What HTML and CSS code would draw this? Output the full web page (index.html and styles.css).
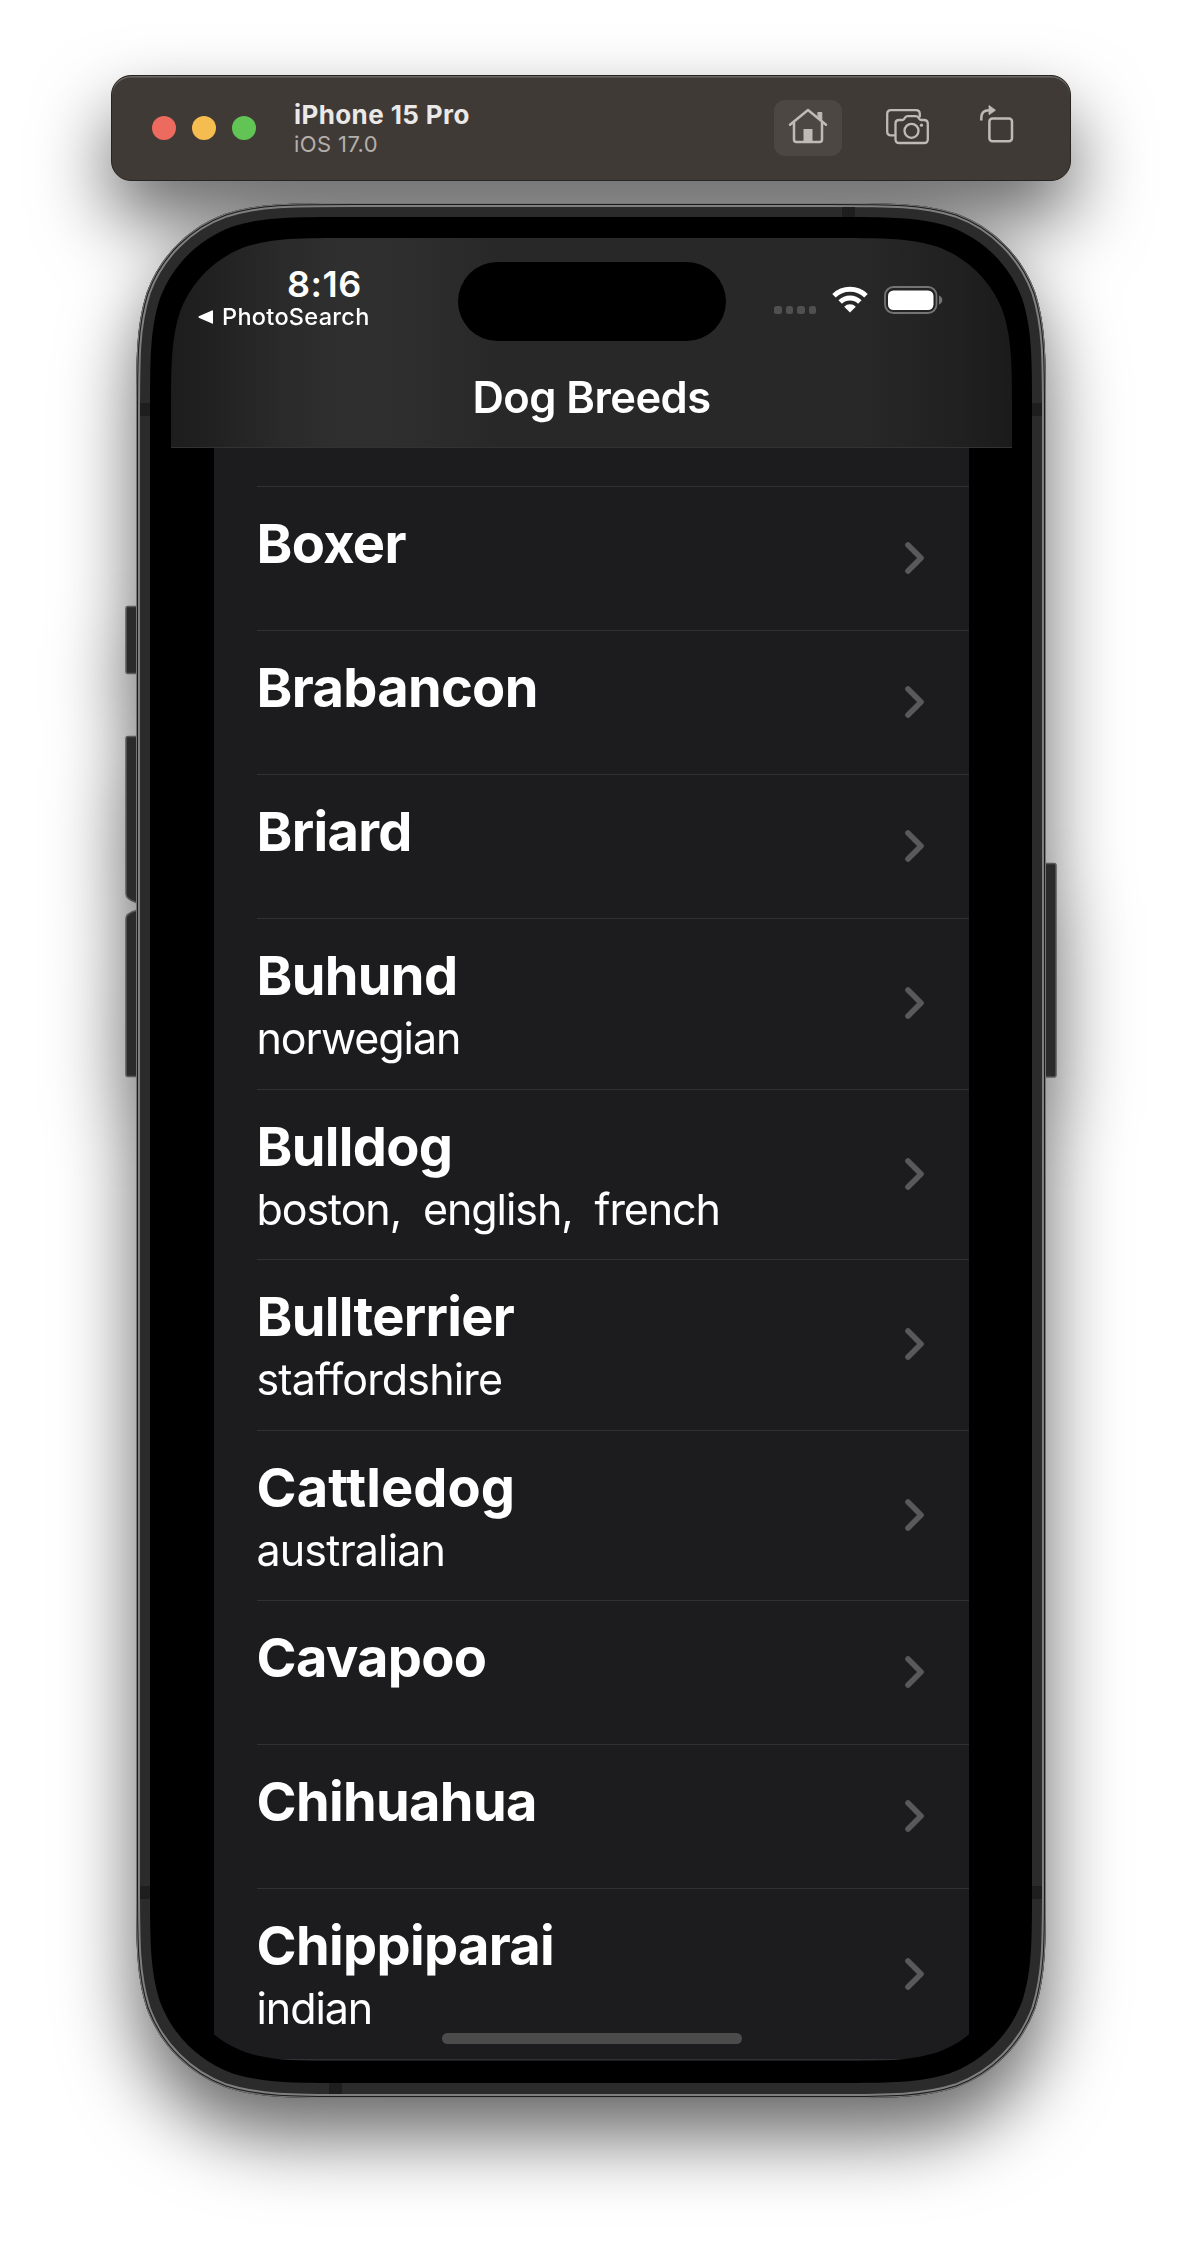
FILE: index.html
```
<!DOCTYPE html>
<html lang="en">
<head>
<meta charset="utf-8">
<title>Dog Breeds</title>
<link rel="stylesheet" href="styles.css">
</head>
<body>
<svg class="defs" aria-hidden="true">
  <symbol id="chevron" viewBox="0 0 19 32"><path d="M3 3 16 16 3 29" fill="none" stroke="#59595b" stroke-width="5.6" stroke-linecap="round" stroke-linejoin="round"/></symbol>
</svg>
<main class="simulator">
  <header class="toolbar">
    <div class="lights"><i class="light light--close"></i><i class="light light--min"></i><i class="light light--max"></i></div>
    <div class="device"><div class="device__name">iPhone 15 Pro</div><div class="device__os">iOS 17.0</div></div>
    <div class="tools">
      <span class="tool tool--active">
        <svg width="40" height="36" viewBox="0 0 40 36" fill="none" stroke="#bfbab6" stroke-width="2.5" stroke-linecap="round" stroke-linejoin="round"><path d="M2 16.8 20 2 38 16.8M6 14V31.500Q6 34 8.500 34H31.500Q34 34 34 31.500V14"/><path d="M30.200 4.500h3.600v9l-3.600-3z" fill="#bfbab6" stroke-width="1"/><path d="M15.500 21h9v12.500h-9z" fill="#bfbab6" stroke="none"/></svg>
      </span>
      <span class="tool tool--camera">
        <svg width="43" height="36" viewBox="0 0 43 36" fill="none" stroke="#bfbab6" stroke-width="2.300" stroke-linecap="round" stroke-linejoin="round"><path d="M8.500 26.400H5Q1.200 26.400 1.200 22.600V5Q1.200 1.200 5 1.200H30Q33.800 1.200 33.800 5V7.500"/><path d="M13 11h3.200q1.200 0 2-1.200l.8-1.200q1-1.500 2.800-1.500h7.900q1.800 0 2.800 1.500l.8 1.200q.8 1.200 2 1.200H38q3.800 0 3.800 3.800V30.200q0 3.800-3.800 3.800H13.300q-3.800 0-3.800-3.800V14.500q0-3.500 3.500-3.500z"/><circle cx="25.500" cy="21.800" r="7"/><circle cx="35.500" cy="16.200" r="1.600" fill="#bfbab6" stroke="none"/></svg>
      </span>
      <span class="tool tool--rotate">
        <svg width="34" height="38" viewBox="0 0 34 38" fill="none" stroke="#bfbab6" stroke-width="2.500"><path d="M1.300 15.500V13Q1.300 5.300 9 5.300"/><path d="M9 .5 15.500 5.200 9 9.800z" fill="#bfbab6" stroke="#bfbab6" stroke-width=".8"/><rect x="9.400" y="13.600" width="22.600" height="22.600" rx="3"/></svg>
      </span>
    </div>
  </header>

  <section class="phone">
    <svg class="phone__body" width="932" height="1897" viewBox="-11 -1 932 1897" aria-hidden="true">
      <defs>
        <path id="shell" d="M217.100 0H692.900C755.400 0 786.700 0 820.300 10.600C857.100 24 886 52.900 899.400 89.700C910 123.300 910 154.600 910 217.100V1677.900C910 1740.400 910 1771.700 899.400 1805.300C886 1842.100 857.100 1871 820.300 1884.400C786.700 1895 755.400 1895 692.900 1895H217.100C154.600 1895 123.300 1895 89.700 1884.400C52.900 1871 24 1842.100 10.600 1805.300C0 1771.700 0 1740.400 0 1677.900V217.100C0 154.600 0 123.300 10.600 89.700C24 52.900 52.900 24 89.700 10.600C123.300 0 154.600 0 217.100 0Z"/>
        <clipPath id="shell-clip"><use href="#shell"/></clipPath>
      </defs>
      <g fill="#2b2b2b" stroke="#5a5a5a" stroke-width="1.500">
        <path d="M2 403.500H-8q-2 0-2 2V468.500q0 2 2 2H2z"/>
        <path d="M2 533.500H-8q-2 0-2 2V691q0 5 10 8.500h2z"/>
        <path d="M2 707.500H0q-10 3-10 8V871.500q0 2 2 2H2z"/>
        <path d="M908 660.500h10q2 0 2 2V872q0 2-2 2h-10z"/>
      </g>
      <g clip-path="url(#shell-clip)">
        <use href="#shell" fill="#2b2b2b" stroke="#7f7f7f" stroke-width="8"/>
        <use href="#shell" fill="none" stroke="#1c1c1c" stroke-width="4"/>
        <use href="#shell" fill="none" stroke="#757575" stroke-width="2"/>
      </g>
      <path fill="#1e1e1e" d="M4 200h10v13H4zM896 200h10v13h-10zM4 1683h10v13H4zM896 1683h10v13h-10zM706 4h13v10h-13zM193 1880h13v11h-13z"/>
      <path transform="translate(14 14)" d="M198.700 0H683.300C740.500 0 769.100 0 799.900 9.700C833.500 22 860 48.500 872.300 82.100C882 112.900 882 141.500 882 198.700V1667.300C882 1724.500 882 1753.100 872.300 1783.900C860 1817.500 833.500 1844 799.900 1856.300C769.100 1866 740.500 1866 683.300 1866H198.700C141.500 1866 112.900 1866 82.100 1856.300C48.500 1844 22 1817.500 9.700 1783.900C0 1753.100 0 1724.500 0 1667.300V198.700C0 141.500 0 112.900 9.700 82.100C22 48.500 48.500 22 82.100 9.700C112.900 0 141.500 0 198.700 0Z"/>
    </svg>

    <div class="screen">
      <div class="navbar">
        <div class="status">
          <div class="status__left">
            <div class="time">8:16</div>
            <div class="back"><svg width="15" height="14" viewBox="0 0 15 14"><path d="M15 .8V13.200Q15 14 14 13.600L.8 7.700Q0 7 .8 6.300L14 .4Q15 0 15 .8z" fill="#fff"/></svg><span>PhotoSearch</span></div>
          </div>
          <div class="island"></div>
          <div class="status__right">
            <div class="dots"><i></i><i></i><i></i><i></i></div>
            <svg class="wifi" width="36" height="27" viewBox="0 0 36 27" fill="none" stroke="#fff" stroke-width="5"><path d="M2 9.800A23 23 0 0 1 34 9.800"/><path d="M8.200 16A14 14 0 0 1 27.800 16"/><path d="M18 26.500 12.200 20.700A8.200 8.200 0 0 1 23.800 20.700z" fill="#fff" stroke="none"/></svg>
            <svg width="59" height="28" viewBox="0 0 59 28"><rect x="1" y="1" width="51.500" height="26" rx="8.500" fill="none" stroke="#747474" stroke-width="1.800"/><rect x="4" y="4.500" width="45.500" height="19.500" rx="5.500" fill="#fff"/><path d="M55 9.500q3.300 1.500 3.300 4.500T55 18.500z" fill="#747474"/></svg>
          </div>
        </div>
        <h1 class="title">Dog Breeds</h1>
      </div>
      <div class="list">
        <div class="row row--cut"></div>
        <div class="row"><div><h2>Boxer</h2></div><svg class="chev"><use href="#chevron"/></svg></div>
        <div class="row"><div><h2>Brabancon</h2></div><svg class="chev"><use href="#chevron"/></svg></div>
        <div class="row"><div><h2>Briard</h2></div><svg class="chev"><use href="#chevron"/></svg></div>
        <div class="row row--sub"><div><h2>Buhund</h2><p>norwegian</p></div><svg class="chev"><use href="#chevron"/></svg></div>
        <div class="row row--sub"><div><h2>Bulldog</h2><p>boston,  english,  french</p></div><svg class="chev"><use href="#chevron"/></svg></div>
        <div class="row row--sub"><div><h2>Bullterrier</h2><p class="loose">staffordshire</p></div><svg class="chev"><use href="#chevron"/></svg></div>
        <div class="row row--sub"><div><h2 class="loose">Cattledog</h2><p class="loose">australian</p></div><svg class="chev"><use href="#chevron"/></svg></div>
        <div class="row"><div><h2>Cavapoo</h2></div><svg class="chev"><use href="#chevron"/></svg></div>
        <div class="row"><div><h2>Chihuahua</h2></div><svg class="chev"><use href="#chevron"/></svg></div>
        <div class="row row--sub"><div><h2>Chippiparai</h2><p>indian</p></div><svg class="chev"><use href="#chevron"/></svg></div>
      </div>
      <div class="home-indicator"></div>
    </div>
  </section>
</main>
</body>
</html>
```
FILE: styles.css
```
* { box-sizing: border-box; margin: 0; padding: 0; }
body { background: #fff; font-family: Inter, "Liberation Sans", sans-serif; font-variant-ligatures: none; color: #fff; height: 2248px; overflow: hidden; }
.defs { position: absolute; width: 0; height: 0; }
svg { display: block; flex: none; }

.simulator {
  width: 960px;
  margin-left: 111px;
  padding-top: 75px;
  display: flex;
  flex-direction: column;
  gap: 22px;
  filter: drop-shadow(0 38px 38px rgba(0, 0, 0, .6));
}

/* Simulator window toolbar */
.toolbar {
  height: 106px;
  border-radius: 20px;
  background: #403a36;
  border: 1px solid #262422;
  box-shadow: inset 0 1.500px 0 #6c6865;
  display: flex;
  align-items: center;
  padding: 0 56px 0 40px;
}
.lights { display: flex; gap: 16px; }
.light { width: 24px; height: 24px; border-radius: 50%; }
.light--close { background: #ed6a5f; }
.light--min { background: #f5bd4f; }
.light--max { background: #61c454; }
.device { margin: 2px 0 0 38px; white-space: nowrap; }
.device__name { font-size: 26px; line-height: 30px; font-weight: 700; color: #ebe9e8; letter-spacing: .4px; }
.device__os { font-size: 22px; line-height: 28px; color: #b3afab; letter-spacing: .4px; }
.tools { margin-left: auto; display: flex; align-items: center; }
.tool--active { width: 68px; height: 56px; border-radius: 11px; background: #4c4743; padding: 8px 14px; }
.tool--camera { margin-left: 44px; padding-bottom: 2px; }
.tool--rotate { margin-left: 51px; padding-bottom: 9px; }

/* Device */
.phone { position: relative; width: 910px; height: 1895px; margin-left: 25px; padding: 35px 0 0 35px; }
.phone__body { position: absolute; left: -11px; top: -1px; }
.screen {
  position: relative;
  width: 841px;
  height: 1823px;
  background: #000;
  display: flex;
  flex-direction: column;
  clip-path: path("M180.400 0H660.600C712.600 0 738.500 0 766.500 8.800C797 19.900 821.100 44 832.200 74.500C841 102.500 841 128.400 841 180.400V1642.600C841 1694.600 841 1720.500 832.200 1748.500C821.100 1779 797 1803.100 766.500 1814.200C738.500 1823 712.600 1823 660.600 1823H180.400C128.400 1823 102.500 1823 74.500 1814.200C44 1803.100 19.900 1779 8.800 1748.500C0 1720.500 0 1694.600 0 1642.600V180.400C0 128.400 0 102.500 8.800 74.500C19.900 44 44 19.900 74.500 8.800C102.500 0 128.400 0 180.400 0Z");
}
.navbar {
  flex: none;
  height: 210px;
  padding-top: 24px;
  border-bottom: 1px solid #323233;
  background: linear-gradient(90deg, #1d1d1d 0, #212121 40px, #2a2a2a 110px, #2f2f2f 170px, #2f2f2f 215px, #282828 330px, #282828 690px, #202020 790px, #1b1b1b 841px);
}
.status { display: grid; grid-template-columns: 287px 268px 1fr; height: 79px; }
.island { height: 79px; border-radius: 40px; background: #000; }
.status__left { padding: 4px 0 0 27px; }
.time { margin-left: 89px; font-size: 36px; line-height: 36px; font-weight: 600; letter-spacing: .5px; }
.back { margin-top: 1px; display: flex; align-items: center; gap: 9px; font-size: 23.500px; line-height: 28px; font-weight: 500; letter-spacing: .3px; }
.status__right { display: flex; padding: 24px 0 0 48px; }
.dots { display: flex; gap: 4px; margin: 20px 16px 0 0; }
.dots i { width: 7.500px; height: 8px; border-radius: 2.500px; background: #505050; }
.wifi { margin-right: 15.500px; }
.title { margin-top: 30px; font-size: 43.500px; line-height: 52px; font-weight: 600; text-align: center; letter-spacing: -.55px; }

.list { flex: 1; margin: 0 43px; background: #1c1c1e; padding-left: 43px; }
.row { height: 144px; border-bottom: 1px solid #313133; padding-right: 45px; display: flex; justify-content: space-between; align-items: center; }
.row > div { align-self: flex-start; padding-top: 26px; }
.row--cut { height: 39px; }
.row--sub { height: 170.600px; }
h2 { margin-left: -.4px; font-size: 54.200px; line-height: 60px; font-weight: 700; letter-spacing: -.7px; }
.row p { margin: 7px 0 0 -.5px; font-size: 43px; line-height: 52px; letter-spacing: -1.080px; white-space: pre; }
h2.loose { letter-spacing: .05px; }
.row p.loose { letter-spacing: -.85px; }
.chev { width: 19px; height: 32px; margin-top: -1px; }

.home-indicator { position: absolute; left: 271px; top: 1795px; width: 300px; height: 11px; border-radius: 6px; background: #4b4b4b; }
```
